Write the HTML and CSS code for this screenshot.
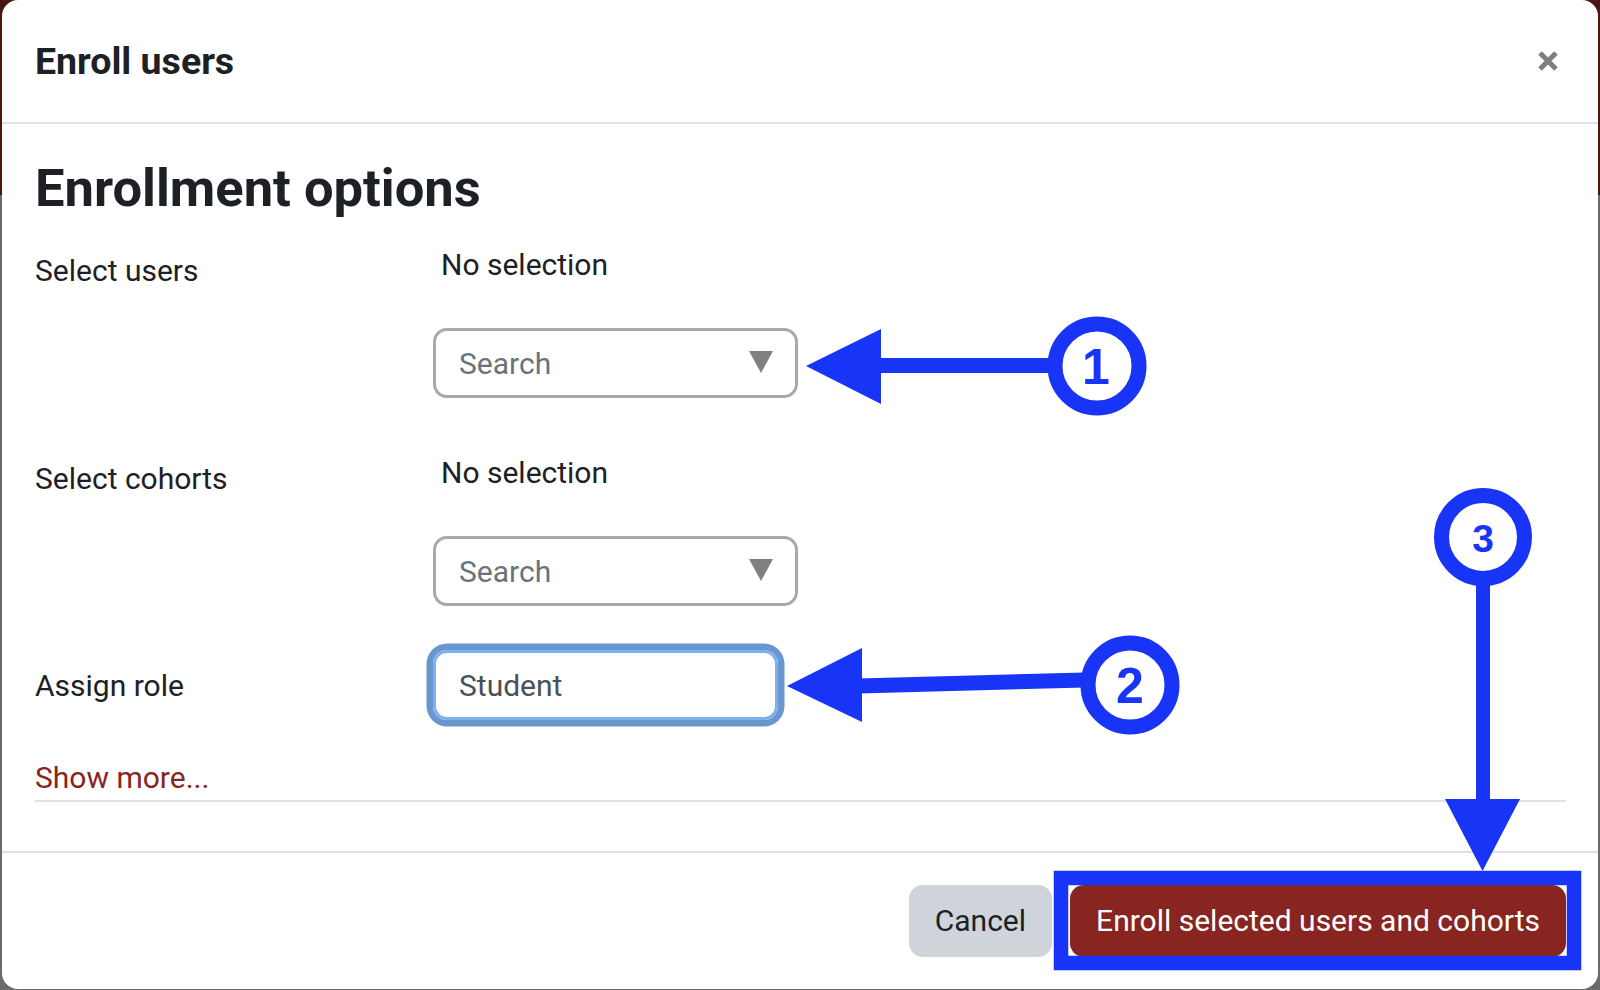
FILE: index.html
```html
<!DOCTYPE html>
<html lang="en">
<head>
<meta charset="utf-8">
<title>Enroll users</title>
<link rel="stylesheet" href="styles.css">
</head>
<body>
<div class="modal">
  <header class="modal-header">
    <h5 class="modal-title">Enroll users</h5>
    <button class="close" aria-label="Close">
      <svg width="20" height="20" viewBox="0 0 20 20"><path d="M2 2 L18 18 M18 2 L2 18" stroke="#7f7f7f" stroke-width="5" fill="none"/></svg>
    </button>
  </header>
  <div class="modal-body">
    <h3 class="section-title">Enrollment options</h3>
    <div class="form-row row-first">
      <div class="form-label">Select users</div>
      <div class="form-value">
        <div class="selection">No selection</div>
        <div class="autocomplete">
          <span class="placeholder">Search</span>
          <svg class="down" width="24" height="22" viewBox="0 0 24 22"><polygon points="0,0 24,0 12,22" fill="#808080"/></svg>
        </div>
      </div>
    </div>
    <div class="form-row row-second">
      <div class="form-label">Select cohorts</div>
      <div class="form-value">
        <div class="selection">No selection</div>
        <div class="autocomplete">
          <span class="placeholder">Search</span>
          <svg class="down" width="24" height="22" viewBox="0 0 24 22"><polygon points="0,0 24,0 12,22" fill="#808080"/></svg>
        </div>
      </div>
    </div>
    <div class="form-row row-role">
      <div class="form-label label-role">Assign role</div>
      <div class="form-value value-role">
        <div class="select-focused">Student</div>
      </div>
    </div>
    <div class="more"><a class="show-more" href="#">Show more...</a></div>
  </div>
  <footer class="modal-footer">
    <button class="btn btn-secondary">Cancel</button>
    <button class="btn btn-primary">Enroll selected users and cohorts</button>
  </footer>
</div>

<svg class="annotations" width="1600" height="990" viewBox="0 0 1600 990">
  <g fill="#1834f6" stroke="none">
    <rect x="878" y="358" width="175" height="15"/>
    <polygon points="806,366 881,329 881,404"/>
    <polygon points="787,686 862,648 862,722"/>
    <rect x="1476" y="580" width="14" height="222"/>
    <polygon points="1445,799 1520,799 1482.5,871"/>
  </g>
  <line x1="858" y1="686" x2="1085" y2="680" stroke="#1834f6" stroke-width="15"/>
  <g fill="#ffffff" stroke="#1834f6" stroke-width="15">
    <circle cx="1097" cy="366" r="42"/>
    <circle cx="1130" cy="685" r="42"/>
    <circle cx="1483" cy="537" r="41.5"/>
  </g>
  <rect x="1061" y="878" width="513" height="85" fill="none" stroke="#1834f6" stroke-width="14.5"/>
  <g class="num" fill="#1834f6" text-anchor="middle">
    <text x="1096" y="384" font-size="50">1</text>
    <text x="1130" y="703" font-size="50">2</text>
    <text x="1483" y="552" font-size="39">3</text>
  </g>
</svg>
</body>
</html>
```

FILE: styles.css
```css
html, body {
  margin: 0;
  padding: 0;
}

body {
  width: 1600px;
  height: 990px;
  overflow: hidden;
  position: relative;
  background: linear-gradient(to bottom, #4a1511 0, #4a1511 195px, #6b6b6b 195px, #6b6b6b 100%);
  font-family: Roboto, "Noto Sans", "Liberation Sans", sans-serif;
  color: #1d2125;
}

.modal {
  margin-left: 2px;
  width: 1596px;
  height: 989px;
  background: #ffffff;
  border-radius: 16px;
  display: flex;
  flex-direction: column;
  box-sizing: border-box;
}

.modal-header {
  height: 124px;
  box-sizing: border-box;
  border-bottom: 2px solid #dee2e6;
  display: flex;
  align-items: center;
  justify-content: space-between;
  padding: 0 40px 0 33px;
}

.modal-title {
  margin: 0;
  font-size: 37.5px;
  line-height: 45px;
  font-weight: 700;
  color: #1d2125;
}

.close {
  border: 0;
  background: transparent;
  padding: 0;
  width: 20px;
  height: 20px;
  display: flex;
}

.modal-body {
  flex: 1;
  padding: 33px 32px 0 33px;
}

.section-title {
  margin: 0 0 16px;
  font-size: 52.5px;
  line-height: 63px;
  font-weight: 700;
  color: #1d2125;
}

.form-row {
  display: grid;
  grid-template-columns: 398px 1fr;
  font-size: 30px;
  line-height: 45px;
}

.row-second {
  margin-top: 46px;
}

.row-role {
  margin-top: 44px;
}

.form-label {
  padding-top: 12px;
}

.label-role {
  padding-top: 13px;
}

.form-value {
  padding-top: 6px;
}

.value-role {
  padding-top: 0;
}

.selection {
  padding-left: 8px;
}

.autocomplete {
  margin-top: 41px;
  width: 365px;
  height: 70px;
  box-sizing: border-box;
  border: 3px solid #a9a9a9;
  border-radius: 14px;
  display: flex;
  align-items: center;
  justify-content: space-between;
  padding: 0 22px 0 23px;
}

.placeholder {
  color: #6a737b;
}

.down {
  display: block;
  margin-top: -2px;
}

.select-focused {
  width: 345px;
  height: 70px;
  box-sizing: border-box;
  border: 3px solid #7eb0ee;
  border-radius: 14px;
  box-shadow: 0 0 0 6.5px #6a96cf;
  padding-left: 23px;
  display: flex;
  align-items: center;
  color: #495057;
}

.more {
  margin-top: 35px;
  border-bottom: 2px solid #dee2e6;
  font-size: 30px;
  line-height: 45px;
}

.show-more {
  color: #882521;
  text-decoration: none;
}

.modal-footer {
  border-top: 2px solid #dee2e6;
  padding: 32px 32px;
  display: flex;
  justify-content: flex-end;
  align-items: center;
  gap: 18px;
}

.btn {
  font-family: Roboto, "Noto Sans", "Liberation Sans", sans-serif;
  font-size: 30px;
  line-height: 44px;
  padding: 12px 24px;
  border: 2px solid transparent;
  border-radius: 14px;
}

.btn-secondary {
  background: #ced4da;
  color: #1d2125;
}

.btn-primary {
  background: #882521;
  color: #ffffff;
}

.annotations {
  position: absolute;
  top: 0;
  left: 0;
  pointer-events: none;
}

.num text {
  font-family: "Liberation Sans", Arial, sans-serif;
  font-weight: 700;
}
```
